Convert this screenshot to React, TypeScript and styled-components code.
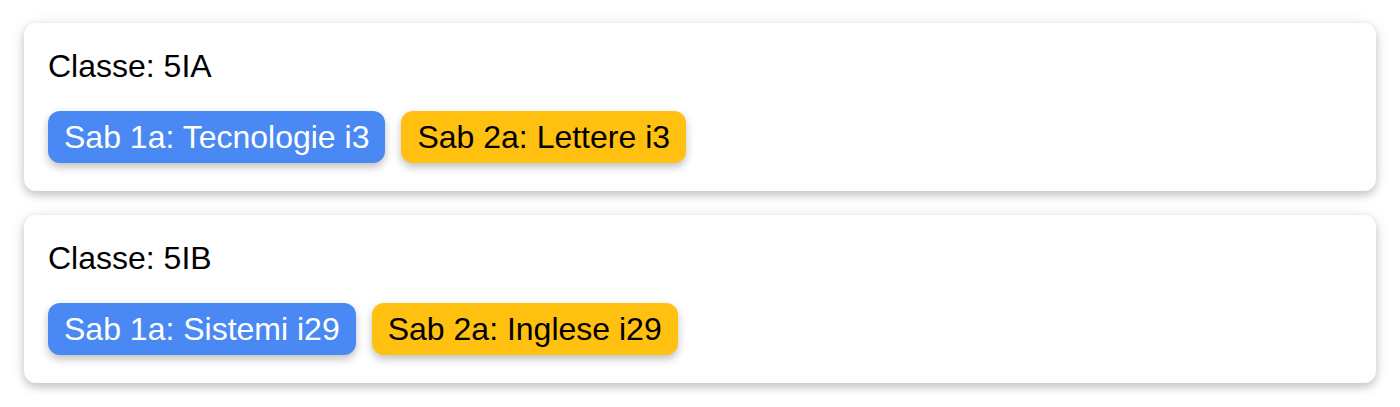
import React from "react";
import styled, { createGlobalStyle } from "styled-components";

const GlobalStyle = createGlobalStyle`
  html, body {
    margin: 0;
    padding: 0;
    background: #ffffff;
  }
  body {
    font-family: "Liberation Sans", Arial, Helvetica, sans-serif;
    color: #000000;
  }
`;

const Page = styled.div`
  display: flex;
  flex-direction: column;
  gap: 24px;
  padding: 23px 24px;
`;

const Card = styled.section`
  background: #ffffff;
  border-radius: 12px;
  padding: 25px 24px 28px;
  box-shadow: 0 4px 10px rgba(0, 0, 0, 0.22), 0 0 18px rgba(0, 0, 0, 0.06);
`;

const Title = styled.div`
  font-size: 32px;
  line-height: 36px;
  margin-bottom: 27px;
`;

const ChipRow = styled.div`
  display: flex;
  gap: 16px;
`;

const Chip = styled.span<{ $tone: "blue" | "amber" }>`
  display: inline-block;
  font-size: 32px;
  line-height: 36px;
  padding: 8px 16px;
  border-radius: 12px;
  background: ${(p) => (p.$tone === "blue" ? "#4a89f3" : "#ffc00f")};
  color: ${(p) => (p.$tone === "blue" ? "#ffffff" : "#000000")};
  box-shadow: 0 4px 8px rgba(0, 0, 0, 0.25);
`;

const classes = [
  { name: "5IA", first: "Sab 1a: Tecnologie i3", second: "Sab 2a: Lettere i3" },
  { name: "5IB", first: "Sab 1a: Sistemi i29", second: "Sab 2a: Inglese i29" },
];

export default function App() {
  return (
    <>
      <GlobalStyle />
      <Page>
        {classes.map((c) => (
          <Card key={c.name}>
            <Title>Classe: {c.name}</Title>
            <ChipRow>
              <Chip $tone="blue">{c.first}</Chip>
              <Chip $tone="amber">{c.second}</Chip>
            </ChipRow>
          </Card>
        ))}
      </Page>
    </>
  );
}
